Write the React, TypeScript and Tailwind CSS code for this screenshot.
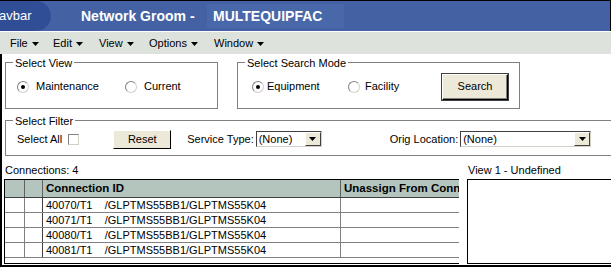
import React from "react"

function Caret() {
  return (
    <svg className="ml-[4px] mt-[2px]" width="7" height="4" viewBox="0 0 7 4">
      <path d="M0 0h7L3.5 4z" fill="#000" />
    </svg>
  )
}

function Radio({ checked }: { checked?: boolean }) {
  return (
    <span className="relative w-[12px] h-[12px] rounded-full border border-t-[#808080] border-l-[#808080] border-r-[#d4d0c8] border-b-[#d4d0c8] bg-white flex items-center justify-center">
      {checked && <span className="w-[4px] h-[4px] rounded-full bg-black" />}
    </span>
  )
}

function Select({ width }: { width: string }) {
  return (
    <div className={`${width} h-[16px] border border-t-[#404040] border-l-[#404040] border-r-[#d4d0c8] border-b-[#d4d0c8] bg-white flex items-center`}>
      <span className="flex-1 pl-[2px] leading-none">(None)</span>
      <span className="w-[16px] h-[14px] bg-[#ece9d8] border border-t-white border-l-white border-r-[#404040] border-b-[#404040] flex items-center justify-center">
        <svg width="7" height="4" viewBox="0 0 7 4">
          <path d="M0 0h7L3.5 4z" fill="#000" />
        </svg>
      </span>
    </div>
  )
}

const rows = ["40070", "40071", "40080", "40081"]

export default function App() {
  return (
    <div className="w-[611px] h-[267px] bg-white overflow-hidden text-[11px] text-black font-['Liberation_Sans',Arial,sans-serif]">
      {/* title bar */}
      <div className="h-[31px] bg-[#4462a3] border-t border-black border-r border-r-black flex items-stretch">
        <div className="w-[51px] bg-[#2f4e95] rounded-r-full flex items-center text-white text-[13px]">
          <span className="-ml-[1px]">avbar</span>
        </div>
        <div className="ml-[30px] flex items-center text-white font-bold text-[14px]">
          <span className="w-[126px] whitespace-pre">Network Groom -</span>
          <span className="px-[6px] h-[24px] flex items-center bg-[#4868a9] w-[137px]">MULTEQUIPFAC</span>
        </div>
      </div>

      {/* menu bar */}
      <div className="h-[23px] bg-[#dee2dd] border-t border-white flex items-center pl-[10px]">
        <span className="w-[43px] flex items-center">File<Caret /></span>
        <span className="w-[46px] flex items-center">Edit<Caret /></span>
        <span className="w-[50px] flex items-center">View<Caret /></span>
        <span className="w-[65px] flex items-center">Options<Caret /></span>
        <span className="flex items-center">Window<Caret /></span>
      </div>

      {/* content */}
      <div className="h-[213px] border-l-2 border-black border-b-2 flex flex-col">
        <div className="flex mt-[8px] ml-[3px]">
          <div className="relative w-[213px] h-[47px] border border-[#808080] flex items-center pl-[11px] pt-[2px]">
            <span className="absolute -top-[8px] left-[7px] bg-white px-[2px]">Select View</span>
            <span className="flex items-center gap-[7px] w-[108px]"><Radio checked />Maintenance</span>
            <span className="flex items-center gap-[7px]"><Radio />Current</span>
          </div>
          <div className="relative ml-[19px] w-[283px] h-[47px] border border-[#808080] flex items-center pl-[14px] pt-[2px]">
            <span className="absolute -top-[8px] left-[7px] bg-white px-[2px]">Select Search Mode</span>
            <span className="flex items-center gap-[3px] w-[96px]"><Radio checked />Equipment</span>
            <span className="flex items-center gap-[5px] w-[94px]"><Radio />Facility</span>
            <button className="w-[66px] h-[26px] bg-[#ece9d8] border border-t-white border-l-white border-r-black border-b-black shadow-[inset_-1px_-1px_0_#808080,0_0_0_1px_#404040]">Search</button>
          </div>
        </div>

        <div className="relative mt-[11px] ml-[3px] w-[620px] h-[36px] border border-[#808080] flex items-center pl-[11px] pt-[2px]">
          <span className="absolute -top-[8px] left-[7px] bg-white px-[2px]">Select Filter</span>
          <span>Select All</span>
          <span className="ml-[6px] w-[11px] h-[11px] border border-t-[#808080] border-l-[#808080] border-r-[#d4d0c8] border-b-[#d4d0c8] bg-white" />
          <button className="ml-[34px] w-[58px] h-[19px] bg-[#ece9d8] border border-t-white border-l-white border-r-black border-b-black">Reset</button>
          <span className="ml-[16px] mr-[2px]">Service Type:</span>
          <Select width="w-[66px]" />
          <span className="ml-[68px] mr-[2px]">Orig Location:</span>
          <Select width="w-[131px]" />
        </div>

        <div className="flex h-[17px] items-end leading-none mt-[3px]">
          <span className="ml-[3px] w-[463px]">Connections: 4</span>
          <span>View 1 - Undefined</span>
        </div>

        <div className="flex mt-[3px] flex-1 pb-[1px]">
          <div className="ml-[2px] w-[455px] border-l border-t border-black border-b border-b-black">
            <div className="flex h-[18px] bg-[#b4c5bd] border-b border-[#404040]">
              <div className="w-[20px] border-r border-[#606060]" />
              <div className="w-[18px] border-r border-[#606060]" />
              <div className="w-[298px] border-r border-[#606060] pl-[3px] font-bold text-[11.5px] flex items-center">Connection ID</div>
              <div className="flex-1 min-w-0 pl-[3px] font-bold text-[11.5px] flex items-center whitespace-nowrap overflow-hidden">Unassign From Conn</div>
            </div>
            {rows.map(r => (
              <div key={r} className="flex h-[15px] border-b border-[#808080]">
                <div className="w-[20px] border-r border-[#808080]" />
                <div className="w-[18px] border-r border-[#404040]" />
                <div className="w-[298px] border-r border-[#808080] pl-[3px] flex items-center whitespace-pre text-[11px]">{`${r}/T1    /GLPTMS55BB1/GLPTMS55K04`}</div>
                <div className="flex-1" />
              </div>
            ))}
          </div>
          <div className="ml-[8px] flex-1 border-l border-t border-b border-black" />
        </div>
      </div>
    </div>
  )
}
